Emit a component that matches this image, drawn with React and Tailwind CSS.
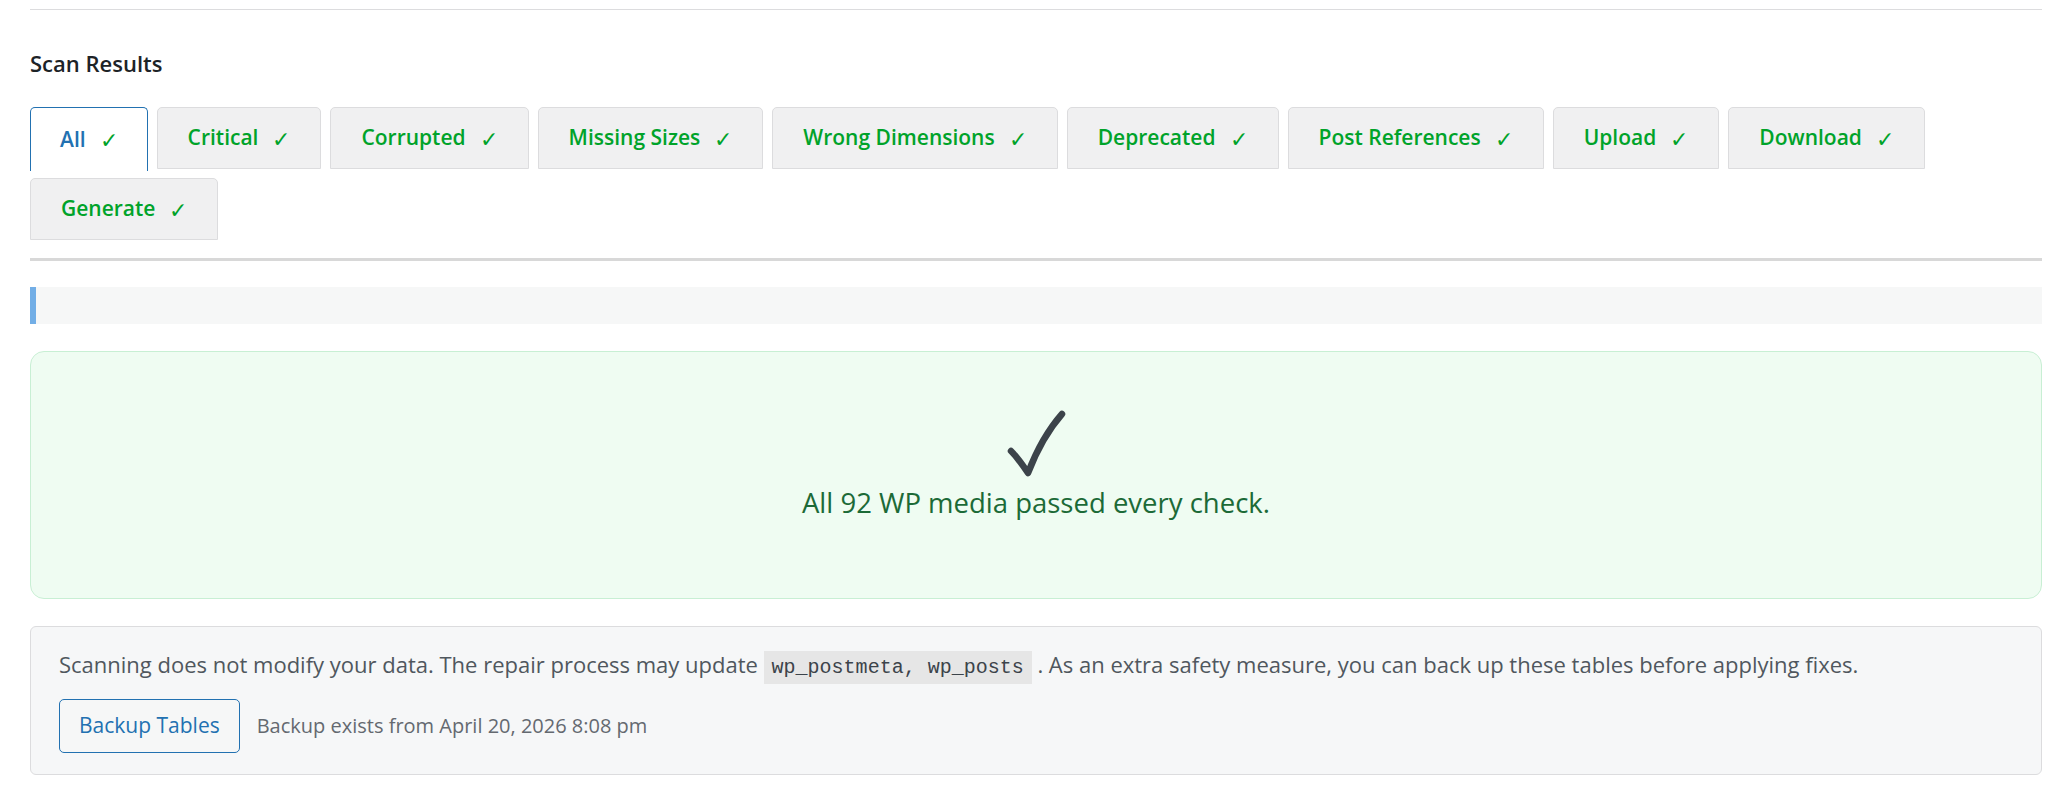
import React from 'react';

const tabs = [
  'All',
  'Critical',
  'Corrupted',
  'Missing Sizes',
  'Wrong Dimensions',
  'Deprecated',
  'Post References',
  'Upload',
  'Download',
  'Generate',
];

const BigCheck = () => (
  <svg width="60" height="68" viewBox="0 0 60 68" className="block">
    <path
      d="M5 41 C 10 46, 16 54, 22 63 C 30 42, 42 20, 56 4"
      fill="none"
      stroke="#3c434a"
      strokeWidth="6.5"
      strokeLinecap="round"
      strokeLinejoin="round"
    />
  </svg>
);

const App = () => {
  const active = 'All';

  return (
    <div className="min-h-[810px] bg-white pl-[30px] pr-[16px] font-['Open_Sans',sans-serif] text-[#1d2327]">
      {/* line from section above */}
      <div className="pt-[9px]">
        <div className="h-px bg-[#dcdcde]" />
      </div>

      <h2 className="mt-[40px] text-[22px] font-semibold leading-[26px]">Scan Results</h2>

      {/* TABS */}
      <div className="mt-[31px] flex flex-wrap items-start gap-x-[9px] gap-y-[9px]">
        {tabs.map(t =>
          t === active ? (
            <button
              key={t}
              className="-mb-[2px] flex h-[64px] items-center rounded-t-[5px] border border-b-0 border-[#2271b1] bg-white px-[29px] text-[21px] font-semibold text-[#2271b1]"
            >
              {t}
              <span className="ml-[14px] text-[22px] font-normal text-[#00a32a]">✓</span>
            </button>
          ) : (
            <button
              key={t}
              className="flex h-[62px] items-center rounded-t-[5px] border border-[#dcdcde] bg-[#f0f0f1] px-[30px] text-[21px] font-semibold text-[#00a32a]"
            >
              {t}
              <span className="ml-[14px] text-[22px] font-normal">✓</span>
            </button>
          )
        )}
      </div>

      <div className="mt-[18px] h-[3px] bg-[#d8d8d8]" />

      {/* PROGRESS */}
      <div className="mt-[26px] h-[37px] border-l-[6px] border-[#72aee6] bg-[#f6f7f7]" />

      {/* SUCCESS */}
      <div className="mt-[27px] flex h-[248px] flex-col items-center rounded-[14px] border border-[#c8efd4] bg-[#effcf2] pt-[58px]">
        <BigCheck />
        <p className="mt-[7px] text-[27.5px] leading-[36px] text-[#1c6a37]">All 92 WP media passed every check.</p>
      </div>

      {/* INFO */}
      <div className="mt-[27px] rounded-[6px] border border-[#dcdcde] bg-[#f6f7f8] px-[28px] pb-[21px] pt-[21px]">
        <p className="text-[22px] leading-[32px] text-[#50575e]">
          Scanning does not modify your data. The repair process may update{' '}
          <code className="bg-[#e6e6e6] px-[8px] py-[5px] font-['Liberation_Mono',monospace] text-[20px] text-[#3c434a]">
            wp_postmeta, wp_posts
          </code>{' '}
          . As an extra safety measure, you can back up these tables before applying fixes.
        </p>
        <div className="mt-[15px] flex items-center gap-[17px]">
          <button className="h-[54px] rounded-[5px] border border-[#2271b1] bg-[#f6f7f7] px-[19px] text-[21px] text-[#2271b1]">
            Backup Tables
          </button>
          <span className="text-[20px] text-[#646970]">Backup exists from April 20, 2026 8:08 pm</span>
        </div>
      </div>
    </div>
  );
};

export default App;
